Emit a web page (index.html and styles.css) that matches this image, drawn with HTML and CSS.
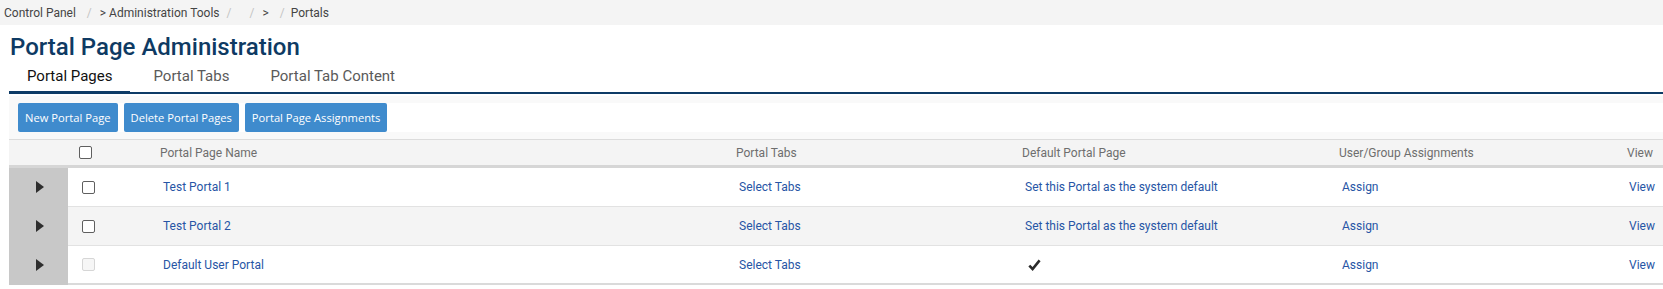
FILE: index.html
```html
<!DOCTYPE html>
<html lang="en">
<head>
<meta charset="utf-8">
<title>Portal Page Administration</title>
<link rel="stylesheet" href="styles.css">
</head>
<body>
<nav class="crumbs">
  <span class="crumb">Control Panel</span>
  <span class="sep">/</span>
  <span class="crumb">&gt; Administration Tools</span>
  <span class="sep sep-b">/</span>
  <span class="crumb crumb-empty"></span>
  <span class="sep sep-c">/</span>
  <span class="crumb">&gt;</span>
  <span class="sep sep-d">/</span>
  <span class="crumb">Portals</span>
</nav>

<h1 class="title">Portal Page Administration</h1>

<div class="tabs">
  <a class="tab active">Portal Pages</a>
  <a class="tab">Portal Tabs</a>
  <a class="tab">Portal Tab Content</a>
</div>

<div class="toolbar">
  <div class="toolbar-inner">
    <button class="btn">New Portal Page</button>
    <button class="btn">Delete Portal Pages</button>
    <button class="btn">Portal Page Assignments</button>
  </div>
</div>

<div class="grid">
  <div class="row head">
    <div class="cell c-exp"></div>
    <div class="cell c-cb"><input type="checkbox" class="cb"></div>
    <div class="cell">Portal Page Name</div>
    <div class="cell">Portal Tabs</div>
    <div class="cell">Default Portal Page</div>
    <div class="cell">User/Group Assignments</div>
    <div class="cell">View</div>
  </div>

  <div class="row body">
    <div class="cell c-exp"><span class="tri"></span></div>
    <div class="cell c-cb"><input type="checkbox" class="cb"></div>
    <div class="cell"><a class="lnk">Test Portal 1</a></div>
    <div class="cell"><a class="lnk">Select Tabs</a></div>
    <div class="cell"><a class="lnk">Set this Portal as the system default</a></div>
    <div class="cell"><a class="lnk">Assign</a></div>
    <div class="cell c-view"><a class="lnk">View</a></div>
  </div>

  <div class="row body alt">
    <div class="cell c-exp"><span class="tri"></span></div>
    <div class="cell c-cb"><input type="checkbox" class="cb"></div>
    <div class="cell"><a class="lnk">Test Portal 2</a></div>
    <div class="cell"><a class="lnk">Select Tabs</a></div>
    <div class="cell"><a class="lnk">Set this Portal as the system default</a></div>
    <div class="cell"><a class="lnk">Assign</a></div>
    <div class="cell c-view"><a class="lnk">View</a></div>
  </div>

  <div class="row body last">
    <div class="cell c-exp"><span class="tri"></span></div>
    <div class="cell c-cb"><input type="checkbox" class="cb" disabled></div>
    <div class="cell"><a class="lnk">Default User Portal</a></div>
    <div class="cell"><a class="lnk">Select Tabs</a></div>
    <div class="cell c-check">
      <svg class="check" width="13" height="12" viewBox="0 0 13 12"><path d="M1.3 6.6 L4.6 10 L11.6 1.4" fill="none" stroke="#2b2b2b" stroke-width="2.6" stroke-linecap="butt" stroke-linejoin="miter"/></svg>
    </div>
    <div class="cell"><a class="lnk">Assign</a></div>
    <div class="cell c-view"><a class="lnk">View</a></div>
  </div>
</div>
</body>
</html>
```
FILE: styles.css
```css
* { box-sizing: border-box; }

html, body {
  margin: 0;
  padding: 0;
  background: #ffffff;
  font-family: Roboto, "Liberation Sans", Arial, sans-serif;
  color: #333;
}

/* breadcrumb */
.crumbs {
  height: 25px;
  background: #f4f4f4;
  display: flex;
  align-items: center;
  padding-left: 4px;
  font-size: 12px;
  color: #444444;
}
.crumb-empty { width: 0; }
.sep {
  color: #c4c4c4;
  margin: 0 8px 0 11px;
}
.sep-b { margin: 0 9px 0 7px; }
.sep-c { margin: 0 8px 0 9px; }
.sep-d { margin: 0 6px 0 11px; }

/* title */
.title {
  margin: 8px 0 0 10px;
  font-size: 24px;
  line-height: 28px;
  font-weight: 500;
  color: #0e3a63;
}

/* tabs */
.tabs {
  display: flex;
  gap: 5px;
  margin-left: 9px;
  border-bottom: 2px solid #0d3b66;
}
.tab {
  display: block;
  padding: 6px 18px;
  line-height: 18px;
  font-size: 15px;
  color: #5a5a5a;
  border-bottom: 3px solid transparent;
  margin-bottom: -2px;
}
.tab.active {
  color: #111;
  border-bottom-color: #0d3b66;
}

/* toolbar */
.toolbar {
  margin: 2px 0 0 9px;
  padding: 7px 0 7px 9px;
  background: #f9f9f9;
}
.toolbar-inner {
  display: flex;
  gap: 6px;
  height: 29px;
  background: #ffffff;
}
.btn {
  height: 29px;
  padding: 0 7px;
  border: none;
  border-radius: 2px;
  background: #3f8bcd;
  color: #ffffff;
  font-family: "Open Sans", Roboto, sans-serif;
  font-size: 11.2px;
  line-height: 29px;
}

/* grid */
.grid {
  margin-left: 9px;
  font-size: 12px;
}
.row {
  display: grid;
  grid-template-columns: 59px 84px 576px 286px 317px 288px 1fr;
}
.head {
  background: #f4f4f4;
  border-top: 1px solid #dcdcdc;
  border-bottom: 3px solid #d6d6d6;
  height: 29px;
  color: #6e6e6e;
}
.head .cell {
  display: flex;
  align-items: center;
  padding-left: 8px;
}
.head .c-cb { padding-left: 11px; }

.body { height: 39px; }
.body.alt { background: #f4f4f4; }
.body .cell {
  display: flex;
  align-items: center;
  padding-left: 11px;
  border-bottom: 1px solid #e2e2e2;
}
.body.last .cell { border-bottom: 2px solid #dadada; }
.body .c-exp {
  background: #c8c8c8;
  border-bottom-color: #c8c8c8 !important;
  padding-left: 27px;
}
.body .c-cb { padding-left: 14px; }
.body .c-view { padding-left: 10px; }
.body .c-check { padding-left: 14px; }

.tri {
  width: 0;
  height: 0;
  border-left: 8px solid #2e2e2e;
  border-top: 6.5px solid transparent;
  border-bottom: 6.5px solid transparent;
}

.cb {
  appearance: none;
  -webkit-appearance: none;
  margin: 0;
  width: 13px;
  height: 13px;
  border: 1px solid #5f5f5f;
  border-radius: 2px;
  background: #ffffff;
}
.cb:disabled {
  border-color: #d6d6d6;
  background: #f6f6f6;
}

.lnk {
  color: #2755a5;
  text-decoration: none;
  white-space: nowrap;
}
.check { display: block; }
```
